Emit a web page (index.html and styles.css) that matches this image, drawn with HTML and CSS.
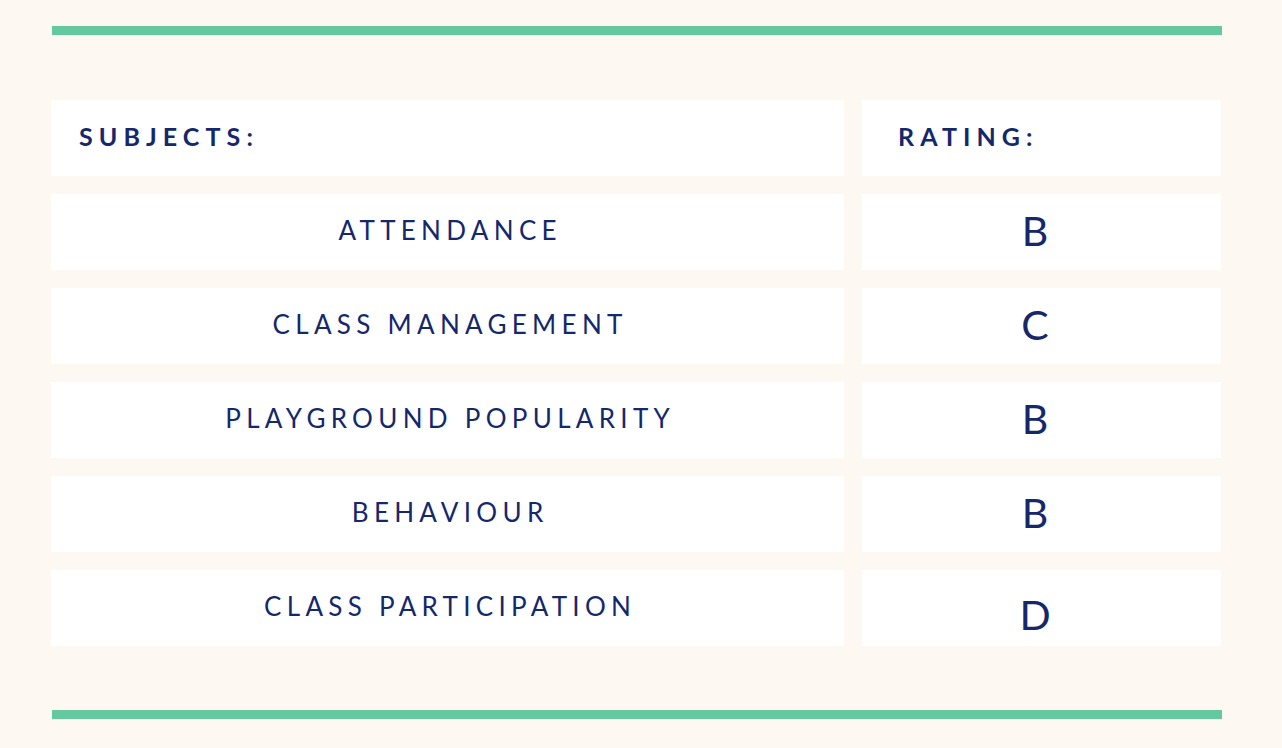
FILE: index.html
```html
<!DOCTYPE html>
<html lang="en">
<head>
<meta charset="utf-8">
<title>Report Card</title>
<link rel="stylesheet" href="styles.css">
</head>
<body>
<div class="page">
  <div class="bar bar-top"></div>
  <div class="table">
    <div class="cell head subj-head">SUBJECTS:</div>
    <div class="cell head rate-head">RATING:</div>

    <div class="cell subject">ATTENDANCE</div>
    <div class="cell grade">B</div>

    <div class="cell subject">CLASS MANAGEMENT</div>
    <div class="cell grade">C</div>

    <div class="cell subject">PLAYGROUND POPULARITY</div>
    <div class="cell grade">B</div>

    <div class="cell subject">BEHAVIOUR</div>
    <div class="cell grade">B</div>

    <div class="cell subject">CLASS PARTICIPATION</div>
    <div class="cell grade grade-low">D</div>
  </div>
  <div class="bar bar-bottom"></div>
</div>
</body>
</html>
```
FILE: styles.css
```css
html, body {
  margin: 0;
  padding: 0;
}
body {
  background: #fdf8f1;
  width: 1282px;
  height: 748px;
  overflow: hidden;
  font-family: "Lato", "Liberation Sans", sans-serif;
  color: #14286b;
}
.page {
  padding-top: 26px;
  display: flex;
  flex-direction: column;
}
.bar {
  height: 9px;
  width: 1170px;
  margin-left: 52px;
  background: #64c99f;
}
.bar-top {
  margin-bottom: 65px;
}
.bar-bottom {
  margin-top: 64px;
}
.table {
  margin-left: 51px;
  display: grid;
  grid-template-columns: 793px 359px;
  grid-auto-rows: 76px;
  column-gap: 18px;
  row-gap: 18px;
}
.cell {
  background: #ffffff;
  display: flex;
  align-items: center;
  line-height: 1;
  box-sizing: border-box;
}
.head {
  font-weight: 700;
  font-size: 25px;
  letter-spacing: 6.1px;
  padding-bottom: 3px;
}
.subj-head {
  padding-left: 28px;
}
.rate-head {
  padding-left: 36px;
}
.subject {
  justify-content: center;
  font-size: 26px;
  font-weight: 400;
  letter-spacing: 5.3px;
  text-indent: 5.3px;
  padding-bottom: 4px;
}
.grade {
  justify-content: center;
  font-size: 41px;
  font-weight: 400;
  padding-right: 13px;
  padding-bottom: 4px;
}
.grade-low {
  padding-bottom: 0;
  padding-top: 13px;
}
```
